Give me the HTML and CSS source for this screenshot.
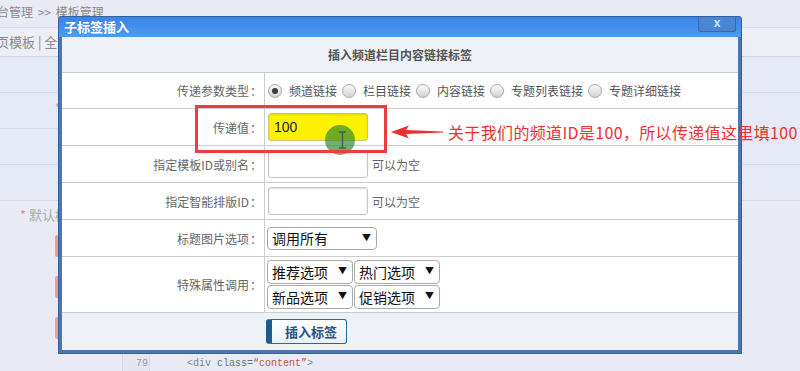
FILE: index.html
```html
<!DOCTYPE html>
<html lang="zh-CN">
<head>
    <meta charset="UTF-8">
    <meta name="viewport" content="width=device-width, initial-scale=1.0">
    <title>子标签插入</title>
    <link rel="stylesheet" href="styles.css">
</head>
<body>
    <div id="page">
        <div class="crumb">台管理 &gt;&gt; 模板管理</div>
        <div class="tabs">页模板 | 全部模板</div>
        <div class="bg-rows">
            <div class="bg-row"></div>
            <div class="bg-row"><span class="req">*</span></div>
            <div class="bg-row"></div>
            <div class="bg-row"></div>
        </div>
        <div class="note"><span class="req">*</span> 默认模板</div>
        <div class="bg-btns">
            <span class="bg-btn"></span>
            <span class="bg-btn"></span>
            <span class="bg-btn"></span>
        </div>
        <div class="code">
            <div class="code-line"><span class="fold"></span><span class="ln">78</span><span class="src">&lt;/div&gt;</span></div>
            <div class="code-line"><span class="fold"></span><span class="ln">79</span><span class="src"><span class="tag">&lt;div</span> <span class="attr">class=</span><span class="val">“content”</span><span class="tag">&gt;</span></span></div>
            <div class="code-line"><span class="fold"></span><span class="ln">80</span><span class="src">    <span class="tag">&lt;h2</span> <span class="attr">class=</span><span class="val">“title”</span><span class="tag">&gt;</span></span></div>
        </div>
    </div>

    <div class="dialog">
        <div class="dlg-title">
            <span>子标签插入</span>
            <span class="dlg-close">x</span>
        </div>
        <div class="dlg-body">
            <div class="form-head">插入频道栏目内容链接标签</div>

            <div class="form-row h36">
                <div class="form-label">传递参数类型<span class="colon">：</span></div>
                <div class="form-field">
                    <label class="radio"><span class="dot on"></span>频道链接</label>
                    <label class="radio"><span class="dot"></span>栏目链接</label>
                    <label class="radio"><span class="dot"></span>内容链接</label>
                    <label class="radio"><span class="dot"></span>专题列表链接</label>
                    <label class="radio"><span class="dot"></span>专题详细链接</label>
                </div>
            </div>

            <div class="form-row">
                <div class="form-label">传递值<span class="colon">：</span></div>
                <div class="form-field">
                    <input class="txt txt-hl" type="text" value="100">
                </div>
            </div>

            <div class="form-row">
                <div class="form-label">指定模板ID或别名<span class="colon">：</span></div>
                <div class="form-field">
                    <input class="txt" type="text">
                    <span class="hint">可以为空</span>
                </div>
            </div>

            <div class="form-row">
                <div class="form-label">指定智能排版ID<span class="colon">：</span></div>
                <div class="form-field">
                    <input class="txt" type="text">
                    <span class="hint">可以为空</span>
                </div>
            </div>

            <div class="form-row">
                <div class="form-label">标题图片选项<span class="colon">：</span></div>
                <div class="form-field">
                    <label class="sel sel-wide"><select><option>调用所有</option></select></label>
                </div>
            </div>

            <div class="form-row h56">
                <div class="form-label">特殊属性调用<span class="colon">：</span></div>
                <div class="form-field sel-grid">
                    <label class="sel"><select><option>推荐选项</option></select></label>
                    <label class="sel"><select><option>热门选项</option></select></label>
                    <label class="sel"><select><option>新品选项</option></select></label>
                    <label class="sel"><select><option>促销选项</option></select></label>
                </div>
            </div>

            <div class="form-foot">
                <button type="button" class="btn-insert">插入标签</button>
            </div>
        </div>
    </div>

    <!-- annotation over the screenshot -->
    <div class="cursor-dot"></div>
    <svg class="ibeam" width="9" height="18" viewBox="0 0 9 18">
        <path d="M1 1h7M4.5 1v16M1 17h7" stroke="#555" stroke-width="1.4" fill="none"/>
    </svg>
    <div class="callout-box"></div>
    <svg class="callout-arrow" width="54" height="16" viewBox="0 0 54 16">
        <polygon points="1,8 19,1.5 16,6 53,7.4 53,8.6 16,10 19,14.5" fill="#f0302f"/>
    </svg>
    <div class="callout-text">关于我们的频道ID是100，所以传递值这里填100</div>
</body>
</html>
```

FILE: styles.css
```css
* {
    box-sizing: border-box;
}

body {
    margin: 0;
    width: 800px;
    height: 371px;
    overflow: hidden;
    position: relative;
    background-color: #e9eaf4;
    font-family: "Noto Sans CJK SC", sans-serif;
    font-size: 12px;
    color: #666;
}

/* page behind the dialog */
.crumb {
    height: 28px;
    line-height: 24px;
    margin-left: -3px;
    color: #8a8a8a;
    word-spacing: 2px;
    border-bottom: 1px solid #dadcea;
}

.tabs {
    height: 29px;
    line-height: 28px;
    margin-left: -4px;
    font-size: 13px;
    color: #8a8a8a;
    background-color: #eeeef7;
    border-bottom: 1px solid #cfd4df;
}

.bg-rows {
    background-color: #e4e9f5;
}

.bg-row {
    height: 36px;
    padding-left: 55px;
    line-height: 30px;
    border-bottom: 1px solid #d3d8e3;
}

.req {
    color: #e58a8a;
}

.note {
    height: 28px;
    line-height: 28px;
    padding-left: 20px;
    font-size: 13px;
    color: #aaa;
}

.bg-btns {
    display: flex;
    flex-direction: column;
    gap: 19px;
    padding: 6px 0 0 55px;
}

.bg-btn {
    display: block;
    width: 100px;
    height: 22px;
    background-color: #e6a19c;
    border-radius: 2px;
}

.code {
    margin-top: 1px;
    font-family: "Liberation Mono", monospace;
    font-size: 10px;
}

.code-line {
    display: flex;
    height: 16px;
    line-height: 16px;
    white-space: pre;
}

.fold {
    width: 123px;
    border-right: 1px solid #d2d7e2;
}

.ln {
    width: 27px;
    padding-right: 1px;
    text-align: right;
    color: #9a9a9a;
    background-color: #e4e7ef;
    border-right: 1px solid #d6dae3;
}

.src {
    padding-left: 37px;
    color: #6f7f6c;
}

.code .tag { color: #7b8a78; }
.code .attr { color: #627a60; }
.code .val { color: #b9544a; }

/* dialog */
.dialog {
    position: absolute;
    left: 58px;
    top: 16px;
    width: 684px;
    height: 338px;
    padding: 0 3px 3px 3px;
    background-color: #4d75b1;
    border: 1px solid #33609e;
    border-radius: 3px 3px 0 0;
}

.dlg-title {
    display: flex;
    justify-content: space-between;
    align-items: flex-start;
    height: 20px;
    margin: 0 -3px;
    padding-left: 5px;
    background: linear-gradient(#3a85e7, #4f99f0);
    border-radius: 2px 2px 0 0;
    color: #fff;
    font-size: 13px;
    font-weight: bold;
    line-height: 20px;
}

.dlg-close {
    width: 38px;
    height: 15px;
    margin-right: 5px;
    background-color: #4a86d3;
    border: 1px solid #3a69ad;
    border-top: none;
    border-radius: 0 0 3px 3px;
    color: #d6e2f3;
    font-family: "Liberation Sans", sans-serif;
    font-size: 12px;
    line-height: 12px;
    text-align: center;
}

.dlg-body {
    height: 313px;
    background-color: #fff;
}

.form-head {
    height: 36px;
    line-height: 35px;
    text-align: center;
    font-weight: bold;
    color: #555;
    background-color: #eef1f6;
    border-bottom: 1px solid #c6cbd1;
}

.form-row {
    display: grid;
    grid-template-columns: 203px 1fr;
    height: 37px;
}

.form-row.h36 {
    height: 36px;
}

.form-row.h56 {
    height: 56px;
}

.form-label {
    display: flex;
    align-items: center;
    justify-content: flex-end;
    padding-right: 1px;
    color: #666;
    border-right: 1px solid #c8cdd2;
    border-bottom: 1px solid #c8cdd2;
}

.colon {
    display: inline-block;
    width: 14px;
    text-align: center;
}

.form-field {
    display: flex;
    align-items: center;
    padding-left: 3px;
    border-bottom: 1px solid #c8cdd2;
}

.radio {
    display: flex;
    align-items: center;
    margin-right: 5px;
    color: #555;
}

.dot {
    position: relative;
    width: 14px;
    height: 14px;
    margin-right: 7px;
    border: 1px solid #a8a8a8;
    border-radius: 50%;
    background: linear-gradient(#fbfbfb, #d2d2d2);
}

.dot.on::after {
    content: "";
    position: absolute;
    left: 3px;
    top: 3px;
    width: 6px;
    height: 6px;
    border-radius: 50%;
    background-color: #3c3c3c;
}

.txt {
    width: 100px;
    height: 28px;
    margin: 0;
    padding: 0 5px;
    border: 1px solid #c6c6c6;
    border-radius: 3px;
    box-shadow: inset 0 1px 2px rgba(0, 0, 0, 0.12);
    background-color: #fff;
    font-family: "Liberation Sans", sans-serif;
    font-size: 14px;
    color: #222;
}

.txt-hl {
    background-color: #fff200;
    border-color: #cdc477;
}

.hint {
    margin-left: 4px;
    color: #666;
}

.sel {
    position: relative;
    display: block;
    width: 86px;
    height: 24px;
}

.sel-wide {
    width: 110px;
    height: 23px;
    margin-left: -1px;
}

.sel select {
    appearance: none;
    width: 100%;
    height: 100%;
    margin: 0;
    padding: 0 0 0 4px;
    border: 1px solid #a9a9a9;
    border-radius: 4px;
    background-color: #fff;
    font-family: "Noto Sans CJK SC", sans-serif;
    font-size: 14px;
    color: #111;
}

.sel::after {
    content: "▼";
    position: absolute;
    right: 6px;
    top: 5px;
    font-size: 9px;
    line-height: 12px;
    color: #111;
}

.sel-grid {
    display: grid;
    grid-template-columns: 86px 86px;
    column-gap: 1px;
    row-gap: 1px;
    align-content: start;
    padding-top: 3px;
    margin-left: -1px;
}

.form-foot {
    height: 37px;
    padding: 6px 0 0 204px;
    background-color: #eef1f5;
}

.btn-insert {
    width: 81px;
    height: 25px;
    padding: 0 0 0 13px;
    text-align: left;
    border: 1px solid #2e6597;
    border-left: 6px solid #1c5c90;
    border-radius: 3px;
    background: linear-gradient(#ffffff, #eaf0f6);
    font-family: "Noto Sans CJK SC", sans-serif;
    font-size: 13px;
    font-weight: bold;
    color: #29527c;
}

/* annotation */
.cursor-dot {
    position: absolute;
    left: 325px;
    top: 125px;
    width: 30px;
    height: 30px;
    border-radius: 50%;
    background-color: rgba(50, 140, 50, 0.7);
}

.ibeam {
    position: absolute;
    left: 338px;
    top: 131px;
}

.callout-box {
    position: absolute;
    left: 195px;
    top: 105px;
    width: 192px;
    height: 48px;
    border: 3px solid #f23b3b;
}

.callout-arrow {
    position: absolute;
    left: 390px;
    top: 124px;
}

.callout-text {
    position: absolute;
    left: 448px;
    top: 122px;
    font-size: 16px;
    line-height: 20px;
    letter-spacing: 0.35px;
    color: #f2302f;
    white-space: nowrap;
}
```
